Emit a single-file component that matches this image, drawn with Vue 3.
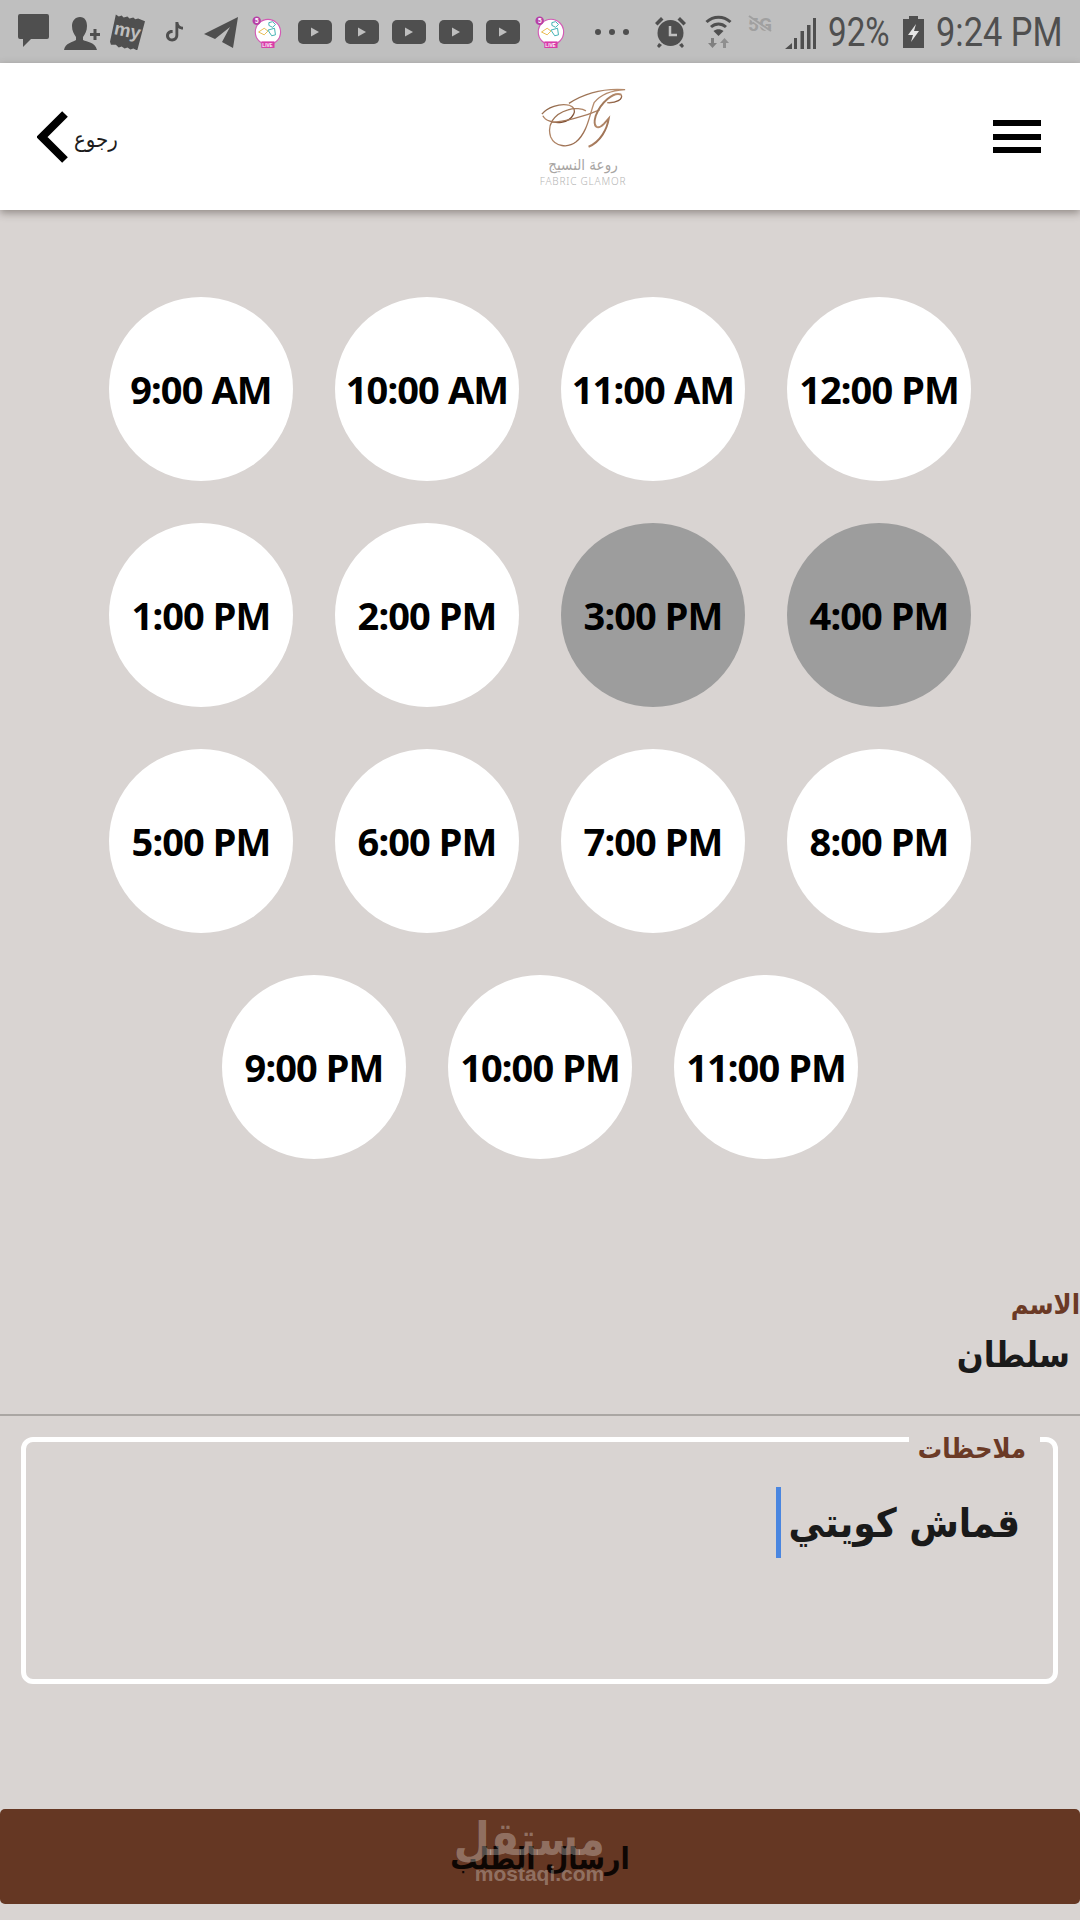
<script setup>
const slots = [
  { t: '9:00 AM' }, { t: '10:00 AM' }, { t: '11:00 AM' }, { t: '12:00 PM' },
  { t: '1:00 PM' }, { t: '2:00 PM' }, { t: '3:00 PM', off: true }, { t: '4:00 PM', off: true },
  { t: '5:00 PM' }, { t: '6:00 PM' }, { t: '7:00 PM' }, { t: '8:00 PM' },
  { t: '9:00 PM' }, { t: '10:00 PM' }, { t: '11:00 PM' }
]
</script>

<template>
  <div class="page">
    <div class="status">
      <svg class="i chat" viewBox="0 0 31 34"><path d="M2 0h27a2 2 0 0 1 2 2v21a2 2 0 0 1-2 2H13L5 33v-8H2a2 2 0 0 1-2-2V2a2 2 0 0 1 2-2z" /></svg>
      <svg class="i person" viewBox="0 0 36 33"><path d="M16 0c5 0 7 4 7 9 0 5-2 8-4 11v3c4 2 12 2 14 10H0c1-7 9-8 12-10v-3c-2-3-4-6-4-11 0-5 3-9 8-9z" /><path d="M29.500 12h3v4h3.500v3h-3.500v4h-3v-4H26v-3h3.500z" /></svg>
      <svg class="i my" viewBox="0 0 36 36">
        <path d="M6 0l3 2 3-1 2 2 4-1 2 2 4-1 2 2 3-1 7 3-8 30-4-2-3 1-3-2-3 1-3-2-3 1-3-3-5 0-1-3z" />
        <text class="my-t" x="4" y="23" transform="rotate(12 18 18)">my</text>
      </svg>
      <svg class="i tiktok" viewBox="0 0 18 22"><path d="M10 1h3c.3 3 2 5 5 5v3c-2 0-3.700-.6-5-1.600V15c0 4-3 6.500-6.500 6.500S0 19 0 15.500 3 9 7 9.500v3.200C5 12.300 3.200 13.500 3.200 15.500c0 1.800 1.500 3 3.200 3s3.600-1.200 3.600-3.500z" /></svg>
      <svg class="i telegram" viewBox="0 0 34 31"><path d="M34 0l-5 31-11-6 8-15-15 12L0 17z" /></svg>
      <svg class="i live" viewBox="0 0 32 34">
        <circle cx="17" cy="17" r="13.500" fill="#fff" stroke="#d35ab5" stroke-width="1.200" />
        <circle cx="5" cy="5" r="4.500" fill="#b73fa6" />
        <text class="live-n" x="3.200" y="7.500">5</text>
        <path d="M7 17l6-4 4 3-4 4z" fill="none" stroke="#e7b94a" stroke-width="1" />
        <path d="M18 7l4-1 3 3-3 3-4-2zM17 15l7-2 1 7-4 1z" fill="none" stroke="#39aeb0" stroke-width="1" />
        <rect x="10" y="27" width="14" height="7" fill="#d83ba8" />
        <text class="live-t" x="11" y="32.500">LIVE</text>
      </svg>
      <svg v-for="n in 5" :key="n" class="i yt" viewBox="0 0 34 24"><rect width="34" height="24" rx="5" /><path class="play" d="M13 7.500l8 4.500-8 4.500z" /></svg>
      <svg class="i live live2" viewBox="0 0 32 34">
        <circle cx="17" cy="17" r="13.500" fill="#fff" stroke="#d35ab5" stroke-width="1.200" />
        <circle cx="5" cy="5" r="4.500" fill="#b73fa6" />
        <text class="live-n" x="3.200" y="7.500">5</text>
        <path d="M7 17l6-4 4 3-4 4z" fill="none" stroke="#e7b94a" stroke-width="1" />
        <path d="M18 7l4-1 3 3-3 3-4-2zM17 15l7-2 1 7-4 1z" fill="none" stroke="#39aeb0" stroke-width="1" />
        <rect x="10" y="27" width="14" height="7" fill="#d83ba8" />
        <text class="live-t" x="11" y="32.500">LIVE</text>
      </svg>
      <svg class="i dots" viewBox="0 0 34 6"><circle cx="3" cy="3" r="3" /><circle cx="17" cy="3" r="3" /><circle cx="31" cy="3" r="3" /></svg>
      <svg class="i alarm" viewBox="0 0 31 32"><circle cx="15.500" cy="17" r="13" /><path d="M0 7l6-6 2.500 2.500-6 6zM31 7l-6-6-2.500 2.500 6 6zM4 27l3 2-3 3-2-2zM27 27l-3 2 3 3 2-2z" /><path class="hand" d="M15 10v9h7" /></svg>
      <svg class="i wifi" viewBox="0 0 27 33"><path class="arc" d="M1.500 7c7-6.500 17-6.500 24 0M6 12c4.500-4 10.500-4 15 0" /><path d="M13.500 21l-5-5c3-2.500 7-2.500 10 0z" /><path class="faint" d="M6 23h3v5h3l-4.500 5L3 28h3z" /><path class="fainter" d="M18 33h3v-5h3l-4.500-5L15 28h3z" /></svg>
      <svg class="i fiveg" viewBox="0 0 28 18"><text class="fiveg-t" x="1" y="16">5G</text><path class="fiveg-k" d="M1 2l23 16" /><path class="fiveg-s" d="M2 1l22 15" /></svg>
      <svg class="i signal" viewBox="0 0 31 31"><path d="M0 31l7-6v6zM9 20h3v11H9zM15.500 13h3.500v18h-3.500zM22 7h3.500v24H22zM28 0h3v31h-3z" /></svg>
      <span class="pct"><b>92%</b></span>
      <svg class="i batt" viewBox="0 0 21 32"><path d="M6 0h9v3h6v29H0V3h6z" /><path class="bolt" d="M13 8l-8 11h5l-2 7 8-11h-5z" /></svg>
      <span class="clock"><b>9:24 PM</b></span>
    </div>

    <header class="top">
      <div class="back">
        <svg class="chev" viewBox="0 0 32 52"><path d="M28 3L5 26l23 23" /></svg>
        <span class="back-t" dir="rtl">رجوع</span>
      </div>
      <div class="logo">
        <svg class="logo-mark" viewBox="30 25 262 190">
          <defs>
            <linearGradient id="cu" x1="0" y1="0" x2="1" y2="1">
              <stop offset="0" stop-color="#6e4629" />
              <stop offset=".45" stop-color="#b98f70" />
              <stop offset="1" stop-color="#5f2c12" />
            </linearGradient>
          </defs>
          <g fill="none" stroke="url(#cu)" stroke-width="4">
            <path d="M118 72C160 45 220 25 290 30 250 32 215 45 195 70 180 110 175 160 140 190 115 210 75 205 62 175 50 140 70 105 115 92 135 85 160 88 170 95" />
            <path d="M35 105C50 85 90 70 120 78 150 88 130 125 95 130 70 133 45 125 38 110" />
            <path d="M65 130C100 128 160 115 212 92" />
            <path d="M278 45C255 35 215 70 200 110 190 145 205 155 225 135L240 118C235 150 215 190 178 205" stroke-width="6" />
            <path d="M278 45C285 60 262 72 235 70" />
          </g>
        </svg>
        <div class="logo-ar" dir="rtl">روعة النسيج</div>
        <div class="logo-en">FABRIC GLAMOR</div>
      </div>
      <div class="burger"><i></i><i></i><i></i></div>
    </header>

    <main class="slots">
      <div v-for="s in slots" :key="s.t" class="slot" :class="{ off: s.off }">{{ s.t }}</div>
    </main>

    <section class="name" dir="rtl">
      <div class="name-l">الاسم</div>
      <div class="name-v">سلطان</div>
    </section>

    <div class="box-wrap">
      <div class="box" dir="rtl">
        <span class="box-l">ملاحظات</span>
        <div class="box-v"><span>قماش كويتي</span><i class="caret"></i></div>
      </div>
    </div>

    <div class="submit">
      <span class="submit-t" dir="rtl">ارسال الطلب</span>
      <div class="mark">
        <div class="mark-a" dir="rtl">مستقل</div>
        <div class="mark-b">mostaqi.com</div>
      </div>
    </div>
  </div>
</template>

<style scoped>
.page { width: 1080px; height: 1920px; background: #d9d4d2; display: flex; flex-direction: column; overflow: hidden; font-family: "DejaVu Sans Condensed", "DejaVu Sans", sans-serif; }

.status { height: 63px; background: #bfbfbf; display: flex; align-items: center; color: #4f4f4f; padding-left: 18px; box-sizing: border-box; flex: none; }
.i { display: block; fill: #4f4f4f; flex: none; }
.chat { width: 31px; height: 34px; margin-top: -1px; }
.person { width: 36px; height: 33px; margin-left: 15px; margin-top: 3px; }
.my { width: 35px; height: 36px; margin-left: 10px; }
.my-t { font: 700 19px "Liberation Sans", sans-serif; fill: #bfbfbf; }
.tiktok { width: 17px; height: 21px; margin-left: 21px; }
.telegram { width: 34px; height: 31px; margin-left: 21px; margin-top: 2px; }
.live { width: 30px; height: 32px; margin-left: 14px; }
.live-n { font: 700 7px "Liberation Sans", sans-serif; fill: #fff; }
.live-t { font: 700 5px "Liberation Sans", sans-serif; fill: #fff; }
.yt { width: 34px; height: 24px; margin-left: 13px; }
.live + .yt { margin-left: 16px; }
.live2 { width: 32px; margin-left: 14px; }
.play { fill: #bfbfbf; }
.dots { width: 34px; height: 6px; margin-left: 29px; }
.alarm { width: 31px; height: 32px; margin-left: 26px; }
.hand { fill: none; stroke: #bfbfbf; stroke-width: 2.500; }
.wifi { width: 27px; height: 33px; margin-left: 19px; }
.arc { fill: none; stroke: #4f4f4f; stroke-width: 3; }
.faint { fill: #808080; }
.fainter { fill: #8f8f8f; }
.fiveg { width: 28px; height: 18px; margin-left: 15px; margin-top: -15px; }
.fiveg-t { font: 700 19px "Roboto", sans-serif; fill: #a0a0a0; }
.fiveg-k { stroke: #bfbfbf; stroke-width: 2; }
.fiveg-s { stroke: #a0a0a0; stroke-width: 2; }
.signal { width: 31px; height: 31px; margin-left: 10px; margin-top: 3px; }
.pct { width: 61px; margin-left: 12px; margin-top: 3px; flex: none; white-space: nowrap; }
.pct b { display: inline-block; font: 400 40px/46px "Roboto", sans-serif; transform: scaleX(.83); transform-origin: 0 50%; }
.batt { width: 21px; height: 32px; margin-left: 14px; margin-top: 1px; }
.clock { width: 123px; margin-left: 12px; margin-top: 3px; flex: none; white-space: nowrap; }
.clock b { display: inline-block; font: 400 40px/46px "Roboto", sans-serif; transform: scaleX(.86); transform-origin: 0 50%; }
.bolt { fill: #e4e4e4; }

.top { height: 147px; flex: none; background: #fff; box-shadow: 0 3px 8px rgba(60, 50, 45, .45); display: grid; grid-template-columns: 1fr 86px 1fr; align-items: start; position: relative; }
.back { display: flex; align-items: center; padding: 48px 0 0 37px; gap: 5px; }
.chev { width: 32px; height: 52px; fill: none; stroke: #000; stroke-width: 8; }
.back-t { font-size: 22px; color: #1c1c1c; margin-top: 5px; line-height: 1; }
.logo { padding-top: 25px; display: flex; flex-direction: column; align-items: center; margin-left: 43px; width: 86px; }
.logo-mark { width: 86px; height: 62px; display: block; flex: none; }
.logo-ar { font-size: 15px; color: #a8a5a3; line-height: 20px; margin-top: 5px; white-space: nowrap; letter-spacing: .5px; }
.logo-en { font: 300 10px/12px "Noto Sans", sans-serif; color: #b5b5b5; letter-spacing: .8px; white-space: nowrap; margin-top: 0; }
.burger { justify-self: end; margin: 57px 39px 0 0; width: 48px; height: 33px; display: flex; flex-direction: column; justify-content: space-between; }
.burger i { display: block; height: 6px; background: #000; }

.slots { margin-top: 87px; padding: 0 109px; display: flex; flex-wrap: wrap; justify-content: center; gap: 42px; flex: none; }
.slot { width: 184px; height: 184px; border-radius: 50%; background: #fff; display: flex; align-items: center; justify-content: center; font: 700 38px "Noto Sans", sans-serif; color: #000; letter-spacing: -.9px; white-space: nowrap; }
.slot.off { background: #9d9d9d; }

.name { margin-top: 129px; padding-bottom: 34px; border-bottom: 2px solid #aaa6a3; flex: none; }
.name-l { font-size: 27px; line-height: 34px; color: #6b3a26; font-weight: 700; }
.name-v { font-size: 35px; line-height: 50px; margin-top: 8px; color: #1a1a1a; padding-right: 10px; font-weight: 700; }

.box-wrap { padding: 21px 22px 0 21px; flex: none; }
.box { height: 247px; box-sizing: border-box; border: 5px solid #fff; border-radius: 12px; position: relative; padding: 45px 33px 0 0; }
.box-l { position: absolute; top: -10px; right: 13px; padding: 0 14px 0 9px; background: #d9d4d2; font-size: 27px; line-height: 34px; font-weight: 700; color: #6b3a26; }
.box-v { display: flex; align-items: center; gap: 8px; height: 71px; font-size: 40px; font-weight: 700; color: #1a1a1a; }
.caret { display: block; width: 5px; height: 71px; background: #4a86e0; }

.submit { margin-top: 125px; height: 95px; background: #653723; border-radius: 5px; display: flex; align-items: center; justify-content: center; position: relative; flex: none; }
.submit-t { font-size: 30px; font-weight: 700; color: #0d0603; margin-top: 4px; }
.mark { position: absolute; left: 474px; top: 6px; width: 131px; color: rgba(255, 255, 255, .3); text-align: center; white-space: nowrap; }
.mark-a { font-size: 46px; line-height: 48px; font-weight: 700; }
.mark-b { font: 700 21px/22px "Liberation Sans", sans-serif; }
</style>

<style>
body { background: #d9d4d2; }
</style>
